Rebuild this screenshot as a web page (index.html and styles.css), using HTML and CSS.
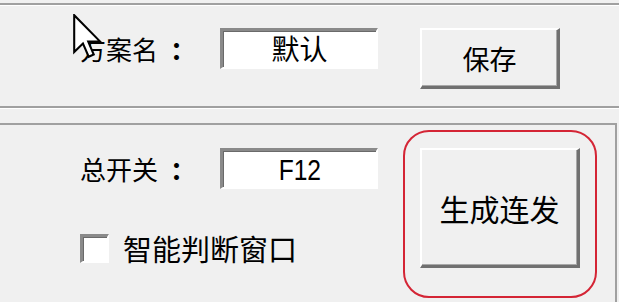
FILE: index.html
```html
<!DOCTYPE html>
<html lang="zh-CN">
<head>
<meta charset="utf-8">
<link rel="stylesheet" href="styles.css">
</head>
<body>
<div class="rule rule-top"></div>
<div class="sec1">
  <div class="label">方案名<span class="colon">：</span></div>
  <div class="field">默认</div>
  <div class="btn btn-save">保存</div>
</div>
<div class="rule"></div>
<div class="panel">
  <div class="left">
    <div class="row">
      <div class="label">总开关<span class="colon">：</span></div>
      <div class="field"><span class="latin">F12</span></div>
    </div>
    <div class="check-row">
      <span class="checkbox"></span>
      <span class="check-label">智能判断窗口</span>
    </div>
  </div>
  <div class="ring">
    <div class="btn btn-gen">生成连发</div>
  </div>
</div>
<svg class="cursor" width="30" height="46" viewBox="0 0 13 20">
  <path d="M0.5,0.5 L0.5,16.5 L4.3,12.8 L6.8,18.6 L9,17.6 L6.6,12 L11.8,12 Z" fill="#fff" stroke="#000" stroke-width="0.9" stroke-linejoin="miter"/>
</svg>
</body>
</html>
```

FILE: styles.css
```css
html, body {
  margin: 0;
  padding: 0;
}
body {
  width: 619px;
  height: 302px;
  overflow: hidden;
  position: relative;
  background: #f0f0f0;
  font-family: "Noto Sans CJK SC", "Liberation Sans", sans-serif;
  color: #000;
}
.rule {
  height: 2px;
  background: #a0a0a0;
  border-bottom: 1px solid #ffffff;
}
.rule-top {
  margin-top: 3px;
}
.sec1 {
  height: 100px;
  box-sizing: border-box;
  padding: 22px 0 0 80px;
  display: flex;
  align-items: flex-start;
}
.label {
  width: 140px;
  height: 42px;
  line-height: 42px;
  font-size: 26px;
  white-space: nowrap;
}
.colon {
  font-family: "Noto Sans CJK TC", "Noto Sans CJK SC", sans-serif;
  font-weight: bold;
  margin-left: 12px;
}
.field {
  width: 158px;
  height: 41px;
  box-sizing: border-box;
  background: #fff;
  border-style: solid;
  border-width: 3px 2px 2px 3px;
  border-color: #8a8a8a #ffffff #ffffff #8a8a8a;
  box-shadow: inset 1px 1px 0 #6a6a6a;
  text-align: center;
  font-size: 28px;
  line-height: 34px;
  overflow: hidden;
}
.latin {
  display: inline-block;
  font-family: "Liberation Sans", sans-serif;
  font-size: 30px;
  transform: scaleX(0.82);
}
.btn {
  box-sizing: border-box;
  background: #f0f0f0;
  border-style: solid;
  border-width: 2px 3px 3px 2px;
  border-color: #ffffff #707070 #707070 #ffffff;
  box-shadow: inset -1px -1px 0 #a8a8a8;
  display: flex;
  align-items: center;
  justify-content: center;
}
.btn-save {
  margin-left: 42px;
  width: 140px;
  height: 61px;
  font-size: 27px;
}
.panel {
  margin-top: 14px;
  width: 617px;
  height: 180px;
  box-sizing: border-box;
  border-top: 2px solid #a0a0a0;
  border-right: 2px solid #a0a0a0;
  display: flex;
  align-items: flex-start;
}
.left {
  padding: 23px 0 0 80px;
  width: 298px;
}
.row {
  display: flex;
}
.check-row {
  margin-top: 43px;
  display: flex;
  align-items: center;
}
.checkbox {
  width: 29px;
  height: 29px;
  box-sizing: border-box;
  background: #fff;
  border-style: solid;
  border-width: 3px 2px 2px 3px;
  border-color: #8a8a8a #ffffff #ffffff #8a8a8a;
  box-shadow: inset 1px 1px 0 #6a6a6a;
}
.check-label {
  margin-left: 14px;
  font-size: 29px;
  line-height: 30px;
  white-space: nowrap;
}
.ring {
  margin: 5px 0 0 25px;
  width: 194px;
  height: 168px;
  box-sizing: border-box;
  border: 2px solid #d42535;
  border-radius: 26px;
  padding: 16px 0 0 15px;
}
.btn-gen {
  width: 160px;
  height: 120px;
  font-size: 30px;
}
.cursor {
  position: absolute;
  left: 73px;
  top: 14px;
}
```
